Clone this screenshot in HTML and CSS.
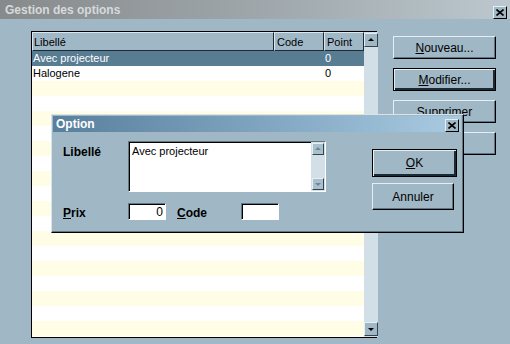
FILE: index.html
```html
<!DOCTYPE html>
<html lang="fr">

<head>
  <meta charset="UTF-8">
  <title>Gestion des options</title>
  <link rel="stylesheet" href="styles.css">
</head>

<body>
  <div class="window">
    <div class="titlebar">
      <span class="title">Gestion des options</span>
      <span class="close"><svg width="8" height="7" viewBox="0 0 8 7"><path d="M0.5 0.5 L7.5 6.5 M7.5 0.5 L0.5 6.5" stroke="#000" stroke-width="1.6" /></svg></span>
    </div>

    <div class="content">
      <div class="list">
        <div class="list-main">
          <div class="head">
            <div class="col c-lib">Libellé</div>
            <div class="col c-code">Code</div>
            <div class="col c-pt">Point</div>
          </div>
          <div class="rows">
            <div class="row selected"><span class="c-lib">Avec projecteur</span><span class="c-code"></span><span class="c-pt">0</span></div>
            <div class="row"><span class="c-lib">Halogene</span><span class="c-code"></span><span class="c-pt">0</span></div>
          </div>
        </div>
        <div class="scroll">
          <span class="arrow up"></span>
          <span class="arrow down"></span>
        </div>
      </div>

      <div class="actions">
        <div class="btn"><u>N</u>ouveau...</div>
        <div class="btn default"><u>M</u>odifier...</div>
        <div class="btn">Supprimer</div>
        <div class="btn"></div>
      </div>
    </div>

    <!-- boite de dialogue par dessus la liste -->
    <div class="dialog">
      <div class="dlg-title">
        <span class="title">Option</span>
        <span class="close"><svg width="8" height="7" viewBox="0 0 8 7"><path d="M0.5 0.5 L7.5 6.5 M7.5 0.5 L0.5 6.5" stroke="#000" stroke-width="1.6" /></svg></span>
      </div>
      <div class="dlg-body">
        <div class="form">
          <div class="field">
            <label class="lbl">Libellé</label>
            <div class="memo">
              <div class="memo-text">Avec projecteur</div>
              <div class="memo-scroll">
                <span class="arrow up small"></span>
                <span class="arrow down small"></span>
              </div>
            </div>
          </div>
          <div class="field inline">
            <label class="lbl"><u>P</u>rix</label>
            <div class="input num">0</div>
            <label class="lbl code"><u>C</u>ode</label>
            <div class="input"></div>
          </div>
        </div>
        <div class="dlg-buttons">
          <div class="btn default ok"><u>O</u>K</div>
          <div class="btn cancel">Annuler</div>
        </div>
      </div>
    </div>
  </div>
</body>

</html>
```

FILE: styles.css
```css
body {
  margin: 0;
  font-family: 'Liberation Sans', Arial, sans-serif;
  font-size: 11px;
}

.window {
  position: relative;
  width: 510px;
  height: 344px;
  background: #a0b8c6;
  overflow: hidden;
}

.titlebar {
  height: 19px;
  display: flex;
  align-items: center;
  justify-content: space-between;
  padding: 0 3px 0 5px;
  background: linear-gradient(90deg, #878a8b, #a3acb1 60%, #bcc8ce);
}

.title {
  font-weight: bold;
  font-size: 12px;
}

.titlebar .title {
  color: #d6dadc;
}

.close {
  width: 12px;
  height: 11px;
  display: flex;
  align-items: center;
  justify-content: center;
  background: #a0b8c6;
  border: 1px solid;
  border-color: #e4eef3 #000 #000 #e4eef3;
  margin-top: 5px;
}

.content {
  display: flex;
  padding: 12px 0 0 31px;
}

/* ---------- liste ---------- */
.list {
  width: 344px;
  height: 305px;
  border: 1px solid #000;
  display: flex;
  background: #fff;
}

.list-main {
  flex: 1;
  display: flex;
  flex-direction: column;
}

.head {
  display: flex;
  height: 19px;
  background: #a0b8c6;
}

.col {
  border: 1px solid;
  border-color: #dbe7ee #1c2a33 #1c2a33 #dbe7ee;
  padding: 2px 1px 0;
  line-height: 14px;
}

.c-lib {
  width: 240px;
}

.c-code {
  width: 47px;
}

.c-pt {
  width: 36px;
}

.head .c-lib {
  width: 238px;
}

.head .c-code {
  width: 45px;
  padding-left: 2px;
}

.head .c-pt {
  width: 35px;
  padding-left: 2px;
}

.rows {
  flex: 1;
  background: repeating-linear-gradient(#fffde6 0 15px, #fff 15px 30px);
}

.row {
  display: flex;
  height: 15px;
  line-height: 15px;
  background: #fff;
}

.row span {
  padding-left: 1px;
}

.row .c-pt {
  padding-left: 4px;
}

.row.selected {
  background: #587c92;
  color: #fff;
}

.scroll {
  width: 16px;
  background: #d3dfe6;
  display: flex;
  flex-direction: column;
  justify-content: space-between;
  align-items: center;
  padding: 1px 0;
}

.arrow {
  width: 12px;
  height: 12px;
  background: #a0b8c6;
  border: 1px solid;
  border-color: #e4eef3 #34444e #34444e #e4eef3;
  position: relative;
}

.arrow::after {
  content: '';
  position: absolute;
  left: 3px;
  border-left: 3px solid transparent;
  border-right: 3px solid transparent;
}

.arrow.up::after {
  top: 4px;
  border-bottom: 3px solid #000;
}

.arrow.down::after {
  top: 5px;
  border-top: 3px solid #000;
}

.arrow.small {
  width: 10px;
  height: 10px;
  background: #a8bfcc;
}

.arrow.small::after {
  left: 2px;
}

.arrow.small.up::after {
  top: 3px;
  border-bottom-color: #6d8899;
}

.arrow.small.down::after {
  top: 4px;
  border-top-color: #6d8899;
}

/* ---------- boutons ---------- */
.actions {
  display: flex;
  flex-direction: column;
  gap: 9px;
  margin: 5px 0 0 16px;
}

.btn {
  width: 101px;
  height: 21px;
  display: flex;
  align-items: center;
  justify-content: center;
  background: #a0b8c6;
  border: 1px solid;
  border-color: #e4eef3 #000 #000 #e4eef3;
  box-shadow: inset -1px -1px 0 #5f7785;
  color: #000;
  font-size: 12px;
}

.btn.default {
  border: 1px solid #000;
  box-shadow: inset 1px 1px 0 #e4eef3, inset -2px -2px 0 #1c2a33;
}

/* ---------- dialogue Option ---------- */
.dialog {
  position: absolute;
  left: 51px;
  top: 114px;
  width: 411px;
  height: 117px;
  background: #a0b8c6;
  border: 1px solid;
  border-color: #d8e4ea #000 #000 #d8e4ea;
  box-shadow: inset -1px -1px 0 #5f7785;
}

.dlg-title {
  height: 16px;
  margin: 1px 2px 0 1px;
  padding: 0 2px 0 3px;
  display: flex;
  align-items: center;
  justify-content: space-between;
  background: linear-gradient(90deg, #587f9c, #7fa4c0 50%, #a9cbe2);
}

.dlg-title .title {
  color: #fff;
}

.dlg-title .close {
  margin-top: 2px;
}

.dlg-body {
  display: flex;
  justify-content: space-between;
  padding: 9px 6px 0 11px;
}

.form {
  display: flex;
  flex-direction: column;
  gap: 10px;
}

.field {
  display: flex;
}

.field.inline {
  align-items: center;
}

.lbl {
  width: 65px;
  font-weight: bold;
  font-size: 12px;
  padding-top: 4px;
}

.lbl.code {
  width: 64px;
  margin-left: 11px;
}

.memo {
  width: 196px;
  height: 49px;
  display: flex;
  background: #fff;
  border: 1px solid;
  border-color: #5f7785 #fff #fff #5f7785;
  box-shadow: inset 1px 1px 0 #000;
}

.memo-text {
  flex: 1;
  padding: 3px 0 0 3px;
}

.memo-scroll {
  width: 14px;
  background: #d3dfe6;
  display: flex;
  flex-direction: column;
  justify-content: space-between;
  align-items: center;
  padding: 1px 0;
}

.input {
  width: 34px;
  height: 15px;
  background: #fff;
  border: 1px solid;
  border-color: #5f7785 #fff #fff #5f7785;
  box-shadow: inset 1px 1px 0 #000;
  line-height: 16px;
  text-align: right;
  padding-right: 2px;
  font-size: 12px;
}

.dlg-buttons {
  display: flex;
  flex-direction: column;
  gap: 6px;
  padding-top: 8px;
}

.btn.ok {
  width: 83px;
  height: 26px;
}

.btn.cancel {
  width: 80px;
  height: 25px;
}
```
